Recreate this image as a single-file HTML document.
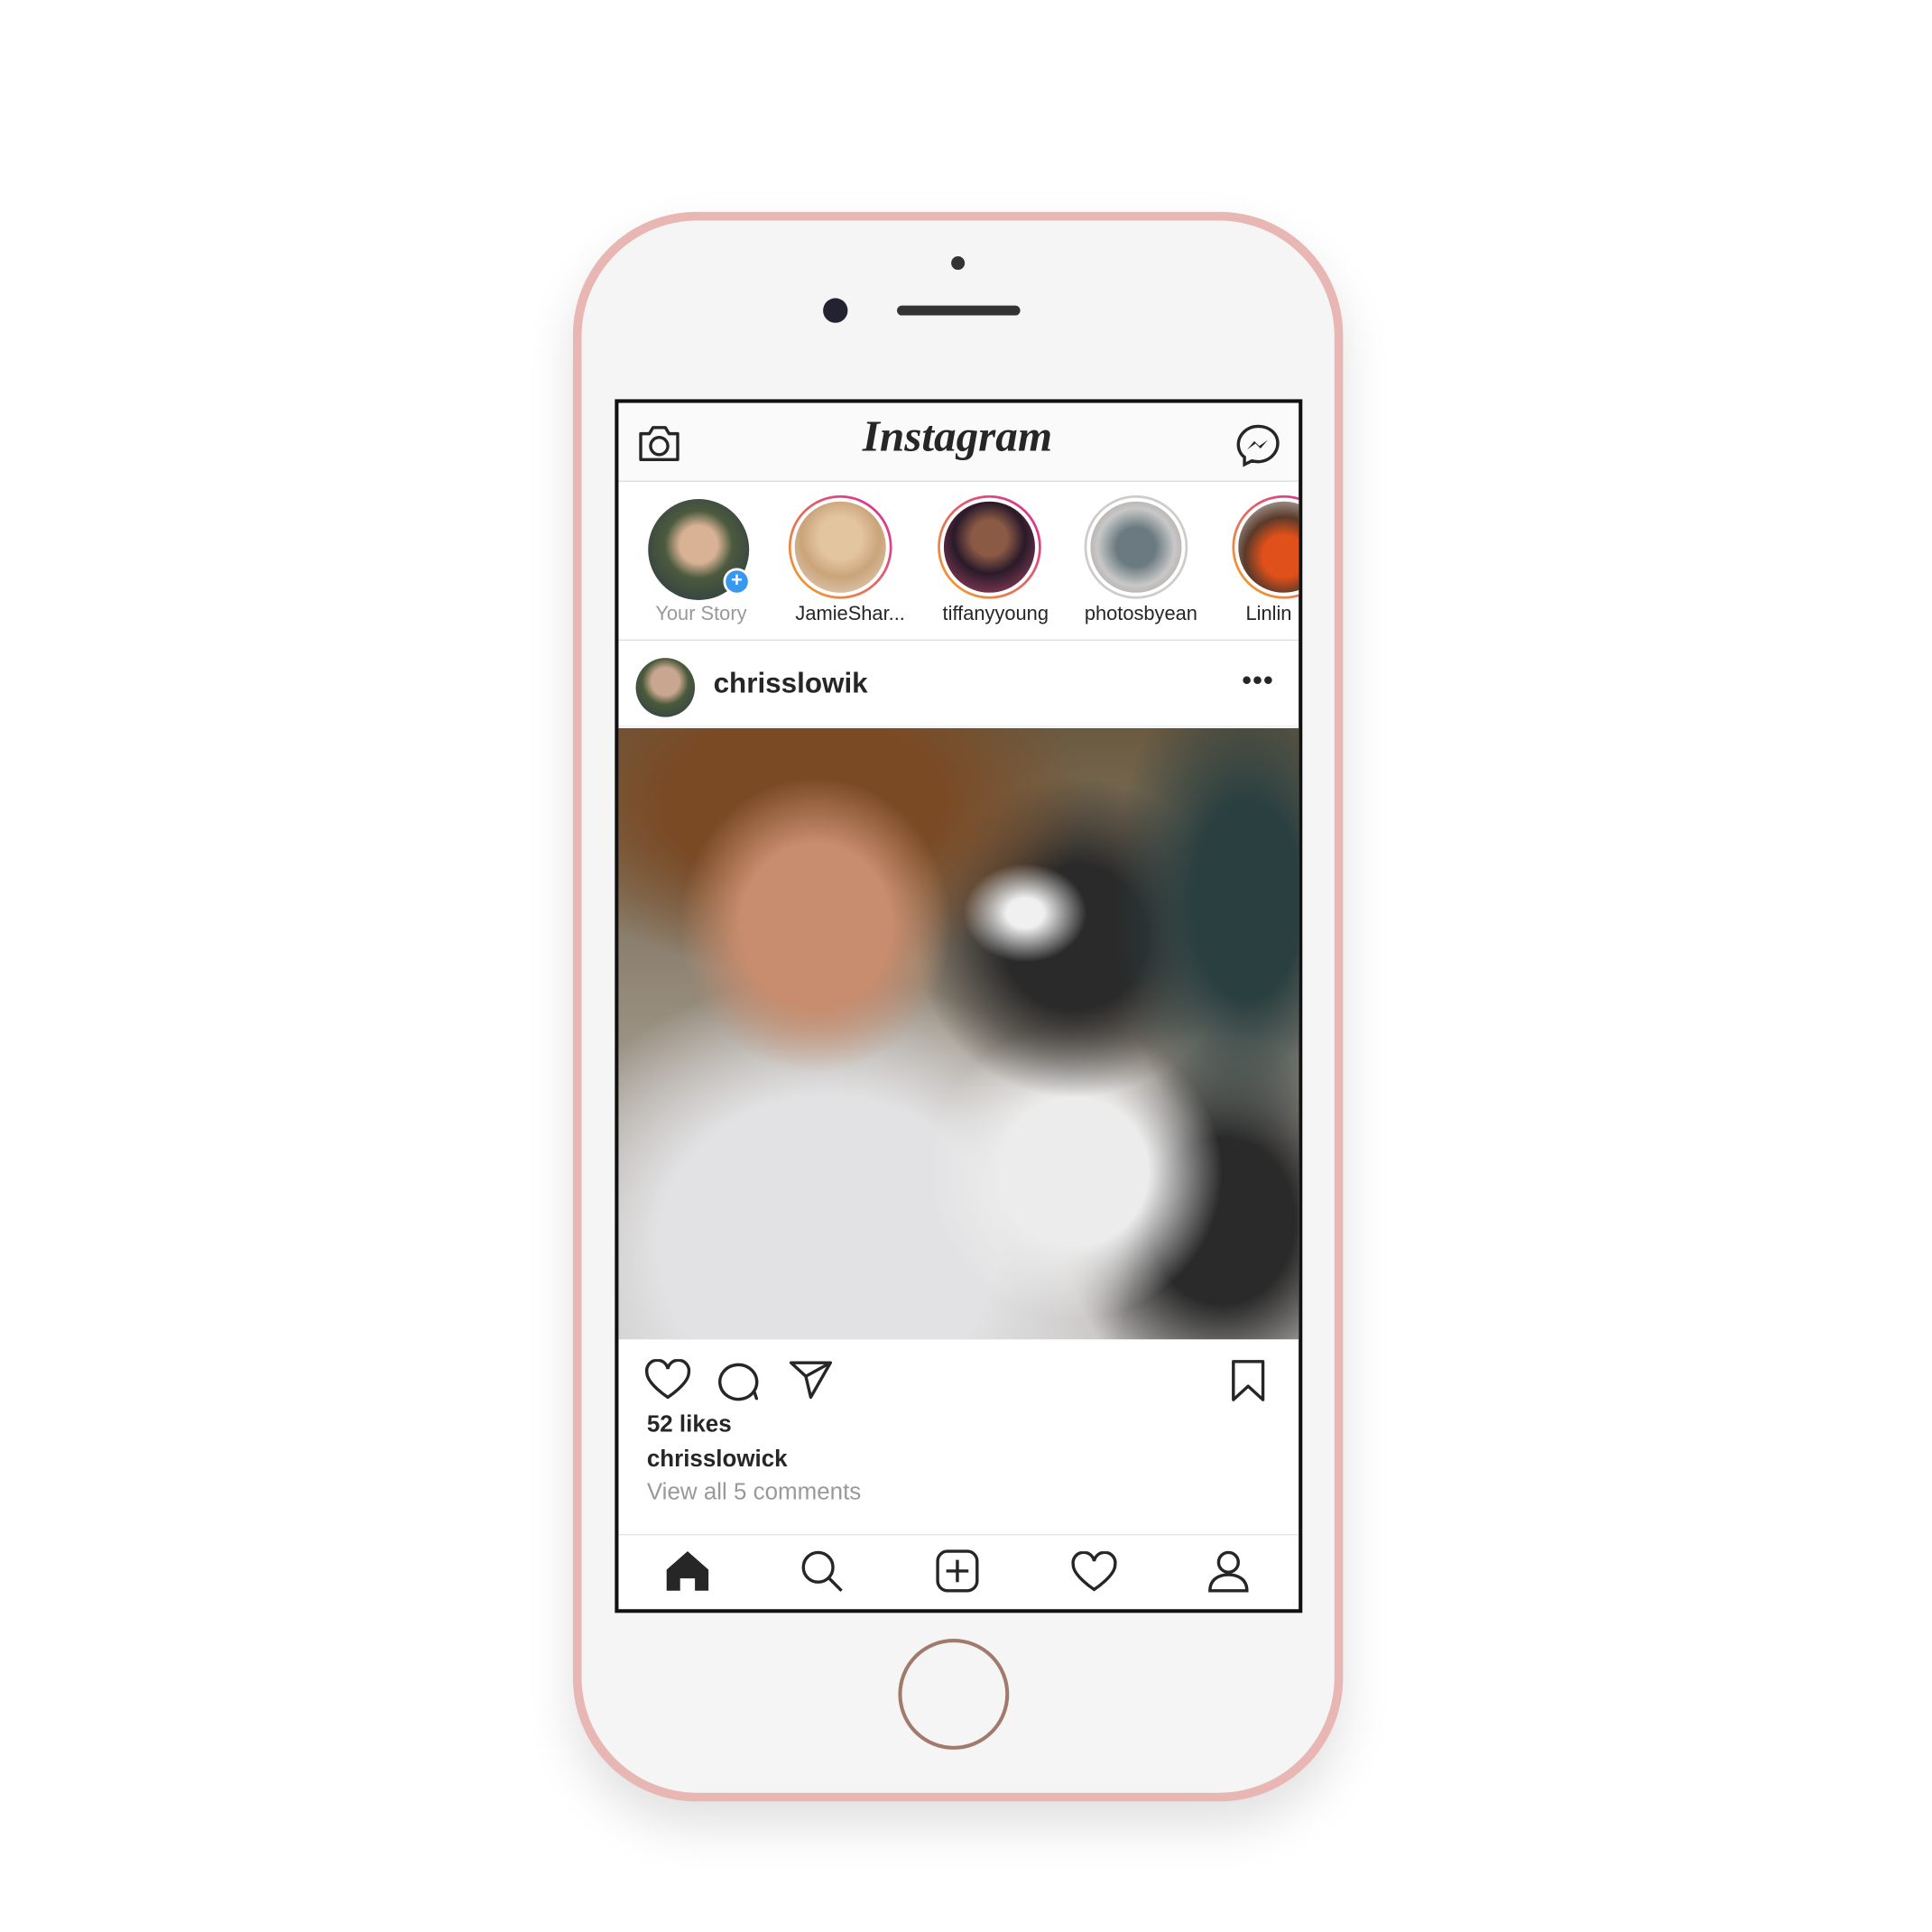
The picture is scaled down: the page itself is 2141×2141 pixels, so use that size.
<!DOCTYPE html>
<html><head><meta charset="utf-8"><style>
html,body{margin:0;padding:0;background:#fff;width:2141px;height:2141px;overflow:hidden}
#w{position:absolute;left:0;top:0;width:1568px;height:1568px;transform:scale(1.36543);transform-origin:0 0;font-family:"Liberation Sans",sans-serif}
.a{position:absolute}
.phone{left:465px;top:172px;width:625px;height:1290px;border-radius:100px;background:#e8b7b3;box-shadow:0 20px 40px rgba(0,0,0,.12)}
.inner{left:472px;top:179px;width:611px;height:1276px;border-radius:94px;background:#f5f5f6}
.screen{left:499px;top:324px;width:558px;height:985px;background:#111}
.scr{left:502px;top:327px;width:552px;height:979px;background:#fff;overflow:hidden}
.st{width:84px;height:84px;border-radius:50%;top:75px}
.pic{width:74px;height:74px;border:3px solid #fff;box-sizing:content-box;border-radius:50%;top:77px}
.lbl{top:163px;font-size:16px;color:#262626;width:120px;text-align:center}
.b{font-weight:bold;color:#262626}
</style></head><body><div id="w">
<div class="a phone"></div>
<div class="a inner"></div>
<div class="a" style="left:772px;top:208px;width:11px;height:11px;border-radius:50%;background:#333"></div>
<div class="a" style="left:668px;top:242px;width:20px;height:20px;border-radius:50%;background:#223"></div>
<div class="a" style="left:728px;top:248px;width:100px;height:8px;border-radius:4px;background:#333"></div>
<div class="a" style="left:729px;top:1330px;width:90px;height:90px;border-radius:50%;border:3px solid #a27a6c;box-sizing:border-box"></div>
<div class="a screen"></div>
<div class="a scr">
 <div class="a" style="left:0;top:0;width:552px;height:63px;background:#fafafa;border-bottom:1px solid #ddd"></div>
 <svg class="a" style="left:14px;top:16px" width="38" height="34" viewBox="0 0 38 34"><path d="M4 9h7l3-5h10l3 5h7v21H4z" fill="none" stroke="#262626" stroke-width="2.5" stroke-linejoin="round"/><circle cx="19" cy="19" r="7" fill="none" stroke="#262626" stroke-width="2.5"/></svg>
 <div class="a" style="left:190px;top:6px;width:170px;text-align:center;font-family:'Liberation Serif',serif;font-style:italic;font-weight:bold;font-size:36px;color:#262626">Instagram</div>
 <svg class="a" style="left:500px;top:16px" width="38" height="38" viewBox="0 0 38 38"><path d="M19 3C10 3 3 10 3 18c0 4 2 8 5 10v6l6-3c2 .5 3 .7 5 .7 9 0 16-7 16-15S28 3 19 3z" fill="none" stroke="#262626" stroke-width="2.5"/><path d="M10 22l6-7 4 4 7-5-6 7-4-4z" fill="#262626"/></svg>
 <!-- stories -->
 <div class="a st" style="left:24px;top:78px;width:82px;height:82px;background:radial-gradient(circle at 50% 45%,#d9b295 0 25%,#4c5a3e 45%,#253545)"></div>
 <div class="a" style="left:85px;top:134px;width:18px;height:18px;border-radius:50%;background:#3897f0;border:2px solid #fff;color:#fff;font-size:16px;line-height:17px;text-align:center;font-weight:bold">+</div>
 <div class="a st" style="left:138px;background:linear-gradient(45deg,#f5a623,#d6249f)"></div>
 <div class="a pic" style="left:140px;background:radial-gradient(circle at 50% 40%,#e3c5a0 0 30%,#caa47a 55%,#e6d8c8)"></div>
 <div class="a st" style="left:259px;background:linear-gradient(45deg,#f5a623,#d6249f)"></div>
 <div class="a pic" style="left:261px;background:radial-gradient(circle at 50% 40%,#8a5a45 0 25%,#2a1a2a 50%,#b04a6a)"></div>
 <div class="a st" style="left:378px;background:#ccc"></div>
 <div class="a pic" style="left:380px;background:radial-gradient(circle at 50% 50%,#6a7a80 0 30%,#c8c8c8 60%,#9a8a80)"></div>
 <div class="a st" style="left:498px;background:linear-gradient(45deg,#f5a623,#d6249f)"></div>
 <div class="a pic" style="left:500px;background:radial-gradient(circle at 50% 60%,#e0501a 0 30%,#5a3a2a 55%,#ddd)"></div>
 <div class="a lbl" style="left:7px;color:#999">Your Story</div>
 <div class="a lbl" style="left:128px">JamieShar...</div>
 <div class="a lbl" style="left:246px">tiffanyyoung</div>
 <div class="a lbl" style="left:364px">photosbyean</div>
 <div class="a lbl" style="left:509px;width:60px;text-align:left">Linlin</div>
 <div class="a" style="left:0;top:192px;width:552px;height:1px;background:#ddd"></div>
 <div class="a" style="left:0;top:262px;width:552px;height:1px;background:#eee"></div>
 <div class="a" style="left:14px;top:207px;width:48px;height:48px;border-radius:50%;background:radial-gradient(circle at 50% 40%,#c9a68f 0 30%,#4a5a3a 50%,#2a3a4a)"></div>
 <div class="a b" style="left:77px;top:214px;font-size:23px">chrisslowik</div>
 <div class="a b" style="left:506px;top:212px;font-size:22px;letter-spacing:1px">•••</div>
 <div class="a" style="left:0;top:264px;width:552px;height:496px;background:
 radial-gradient(ellipse 50px 40px at 330px 150px,#f0f0f0 0 30%,transparent 100%),
 radial-gradient(ellipse 110px 120px at 160px 160px,#c88d6e 0 55%,transparent 100%),
 radial-gradient(ellipse 230px 140px at 150px 60px,#7a4a25 0 50%,transparent 100%),
 radial-gradient(ellipse 110px 200px at 510px 140px,#2a3f40 0 40%,transparent 100%),
 radial-gradient(ellipse 130px 130px at 370px 170px,#2a2a2a 0 45%,transparent 100%),
 radial-gradient(ellipse 120px 120px at 370px 360px,#ececec 0 50%,transparent 100%),
 radial-gradient(ellipse 250px 220px at 170px 420px,#e2e2e4 0 55%,transparent 100%),
 radial-gradient(ellipse 130px 150px at 490px 400px,#2a2a2a 0 45%,transparent 100%),
 linear-gradient(180deg,#6a5a40,#c9c6c4)"></div>
 <svg class="a" style="left:20px;top:776px" width="40" height="34" viewBox="0 0 40 34"><path d="M20 31S3 20 3 11a8 8 0 0117-3 8 8 0 0117 3c0 9-17 20-17 20z" fill="none" stroke="#262626" stroke-width="2.5"/></svg>
 <svg class="a" style="left:80px;top:776px" width="36" height="34" viewBox="0 0 36 34"><path d="M30 26A15 14 0 1127 8a15 14 0 013 18l2 6z" fill="none" stroke="#262626" stroke-width="2.5" stroke-linejoin="round"/></svg>
 <svg class="a" style="left:137px;top:776px" width="38" height="34" viewBox="0 0 38 34"><path d="M3 3h32L19 31 15 14zM15 14l20-11" fill="none" stroke="#262626" stroke-width="2.5" stroke-linejoin="round"/></svg>
 <svg class="a" style="left:496px;top:776px" width="30" height="36" viewBox="0 0 30 36"><path d="M3 2h24v31l-12-11L3 33z" fill="none" stroke="#262626" stroke-width="2.5" stroke-linejoin="round"/></svg>
 <div class="a b" style="left:23px;top:819px;font-size:19px">52 likes</div>
 <div class="a b" style="left:23px;top:847px;font-size:19px">chrisslowick</div>
 <div class="a" style="left:23px;top:874px;font-size:19px;color:#999">View all 5 comments</div>
 <div class="a" style="left:0;top:918px;width:552px;height:1px;background:#e5e5e5"></div>
 <svg class="a" style="left:36px;top:930px" width="40" height="36" viewBox="0 0 40 36"><path d="M3 17L20 2l17 15v17H26V24h-12v10H3z" fill="#262626"/></svg>
 <svg class="a" style="left:146px;top:930px" width="38" height="36" viewBox="0 0 38 36"><circle cx="16" cy="15" r="12" fill="none" stroke="#262626" stroke-width="2.5"/><path d="M25 24l10 10" stroke="#262626" stroke-width="2.5"/></svg>
 <svg class="a" style="left:257px;top:930px" width="36" height="36" viewBox="0 0 36 36"><rect x="2" y="2" width="32" height="32" rx="8" fill="none" stroke="#262626" stroke-width="2.5"/><path d="M18 9v18M9 18h18" stroke="#262626" stroke-width="2.5"/></svg>
 <svg class="a" style="left:366px;top:932px" width="40" height="34" viewBox="0 0 40 34"><path d="M20 31S3 20 3 11a8 8 0 0117-3 8 8 0 0117 3c0 9-17 20-17 20z" fill="none" stroke="#262626" stroke-width="2.5"/></svg>
 <svg class="a" style="left:477px;top:930px" width="36" height="36" viewBox="0 0 36 36"><circle cx="18" cy="11" r="8" fill="none" stroke="#262626" stroke-width="2.5"/><path d="M3 34c0-9 7-13 15-13s15 4 15 13z" fill="none" stroke="#262626" stroke-width="2.5"/></svg>
</div>
</div></body></html>
